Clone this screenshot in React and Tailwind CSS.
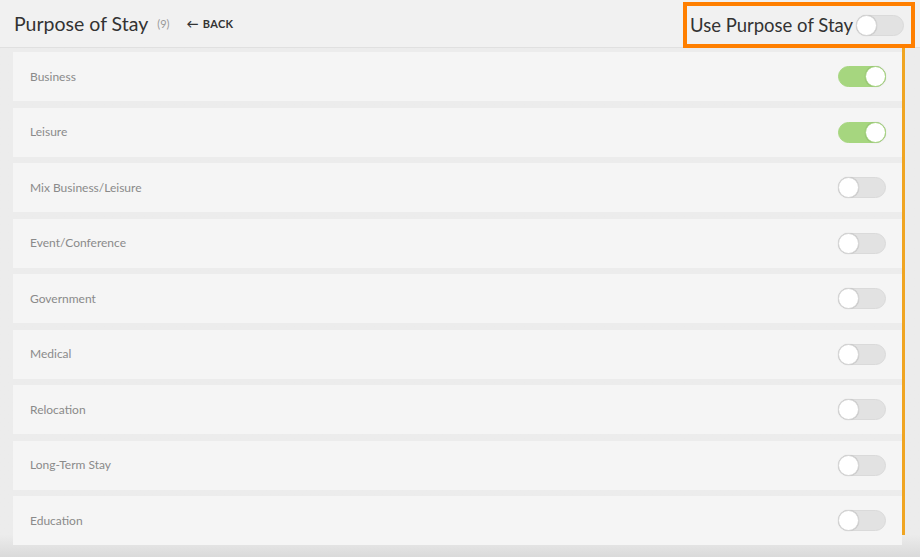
import React, { useState } from 'react';

const purposes = [
  { id: 'business', label: 'Business', on: true },
  { id: 'leisure', label: 'Leisure', on: true },
  { id: 'mix', label: 'Mix Business/Leisure', on: false },
  { id: 'event', label: 'Event/Conference', on: false },
  { id: 'gov', label: 'Government', on: false },
  { id: 'medical', label: 'Medical', on: false },
  { id: 'relocation', label: 'Relocation', on: false },
  { id: 'long', label: 'Long-Term Stay', on: false },
  { id: 'education', label: 'Education', on: false },
];

const Toggle = ({ on, onClick }) => (
  <button
    onClick={onClick}
    className={`relative shrink-0 w-[48px] h-[21px] rounded-full border transition-colors ${
      on ? 'bg-[#a6d67f] border-[#a6d67f]' : 'bg-[#e2e2e2] border-[#dadada]'
    }`}
  >
    <span
      className={`absolute top-[-1px] w-[21px] h-[21px] rounded-full bg-white shadow-[0_0_1px_rgba(0,0,0,0.25)] border ${
        on ? 'right-[-1px] border-[#a6d67f]' : 'left-[-1px] border-[#d8d8d8]'
      }`}
    />
  </button>
);

export default function App() {
  const [items, setItems] = useState(purposes);
  const [usePurpose, setUsePurpose] = useState(false);

  const flip = (id) =>
    setItems(items.map((i) => (i.id === id ? { ...i, on: !i.on } : i)));

  return (
    <div
      className="w-[920px] h-[557px] overflow-hidden bg-linear-to-b from-[#ececec] from-[96%] to-[#dadada] flex flex-col"
      style={{ fontFamily: '"Source Sans Pro", Lato, "Noto Sans", sans-serif' }}
    >
      {/* Header */}
      <div className="relative h-[48px] shrink-0 flex items-center border-b border-[#e0e0e0] bg-[#f1f1f1] pl-[14px]">
        <h1 className="text-[19.5px] text-[#333] leading-none mt-[1px]">Purpose of Stay</h1>
        <span className="ml-[9px] text-[11px] text-[#999] mt-[1px]">(9)</span>
        <button className="ml-[17px] flex items-center gap-[4px] text-[11px] font-bold text-[#333] tracking-wide mt-[1px]">
          <span className="text-[12px] leading-none">&larr;</span> BACK
        </button>

        <div className="absolute right-[5px] top-[2px] h-[46px] w-[232px] border-[4px] border-[#ff7f00] flex items-center pl-[3px] gap-[3px]">
          <span className="text-[18.5px] text-[#333] whitespace-nowrap mt-[1px]">Use Purpose of Stay</span>
          <Toggle on={usePurpose} onClick={() => setUsePurpose(!usePurpose)} />
        </div>
      </div>

      {/* List */}
      <div className="relative flex-1 flex flex-col gap-[6.5px] pl-[13px] pr-[18px] pt-[4px]">
        {items.map((item) => (
          <div
            key={item.id}
            className="h-[49px] shrink-0 bg-[#f5f5f5] flex items-center justify-between pl-[17px] pr-[16px]"
          >
            <span className="text-[12px] text-[#8a8a8a]">{item.label}</span>
            <Toggle on={item.on} onClick={() => flip(item.id)} />
          </div>
        ))}
        <div className="absolute right-[15px] top-0 h-[487px] w-[3px] bg-[#f0a522]" />
      </div>
    </div>
  );
}
